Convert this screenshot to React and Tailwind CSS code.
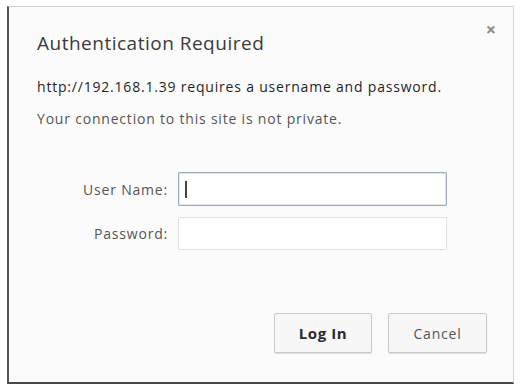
import React from "react";

const App = () => {
    return (
        <div className="w-[520px] h-[387px] bg-white pt-[6px] pl-[7px]" style={{ fontFamily: '"Open Sans", "Noto Sans", sans-serif' }}>
            {/* Dialog */}
            <div className="relative w-[507px] h-[378px] bg-[#fbfbfb] border-t border-t-[#cfcfcf] border-r border-r-[#d6d6d6] border-l-2 border-l-[#555] border-b-2 border-b-[#4a4a4a] flex flex-col pl-[28px] pr-[26px]">
                <button className="absolute right-[17px] top-[13px] text-[#8a8a8a] text-[18px] leading-none font-bold">×</button>

                <h1 className="mt-[23px] text-[19px] leading-[26px] text-[#3a3a3a] tracking-[0.5px]">Authentication Required</h1>
                <p className="mt-[21px] text-[14px] leading-[20px] text-[#1f1f2a] tracking-[0.8px]">
                    http://192.168.1.39 requires a username and password.
                </p>
                <p className="mt-[12px] text-[14px] leading-[20px] text-[#555] tracking-[0.8px]">
                    Your connection to this site is not private.
                </p>

                {/* Form */}
                <div className="mt-[43px] grid grid-cols-[131px_269px] gap-x-[10px] gap-y-[11px] items-center">
                    <label className="text-right text-[14px] text-[#555] tracking-[0.8px]">User Name:</label>
                    <div className="h-[34px] bg-white border border-[#9eabbd] rounded-[1px] flex items-center pl-[6px] shadow-[inset_0_0_0_1px_#dfe6ef]">
                        <span className="w-[1.5px] h-[17px] bg-[#444]"></span>
                    </div>
                    <label className="text-right text-[14px] text-[#555] tracking-[0.8px]">Password:</label>
                    <div className="h-[33px] bg-white border border-[#e2e2e2] rounded-[1px]"></div>
                </div>

                {/* Buttons */}
                <div className="mt-auto mb-[29px] flex justify-end gap-[16px]">
                    <button className="w-[98px] h-[40px] bg-[#f7f7f7] border border-[#c9c9c9] rounded-[2px] shadow-[0_1px_1px_rgba(0,0,0,0.12)] text-[15px] font-bold text-[#2a2a33] tracking-[0.6px]">
                        Log In
                    </button>
                    <button className="w-[99px] h-[40px] bg-[#f7f7f7] border border-[#c9c9c9] rounded-[2px] shadow-[0_1px_1px_rgba(0,0,0,0.12)] text-[14px] text-[#555] tracking-[0.8px]">
                        Cancel
                    </button>
                </div>
            </div>
        </div>
    );
};

export default App;
